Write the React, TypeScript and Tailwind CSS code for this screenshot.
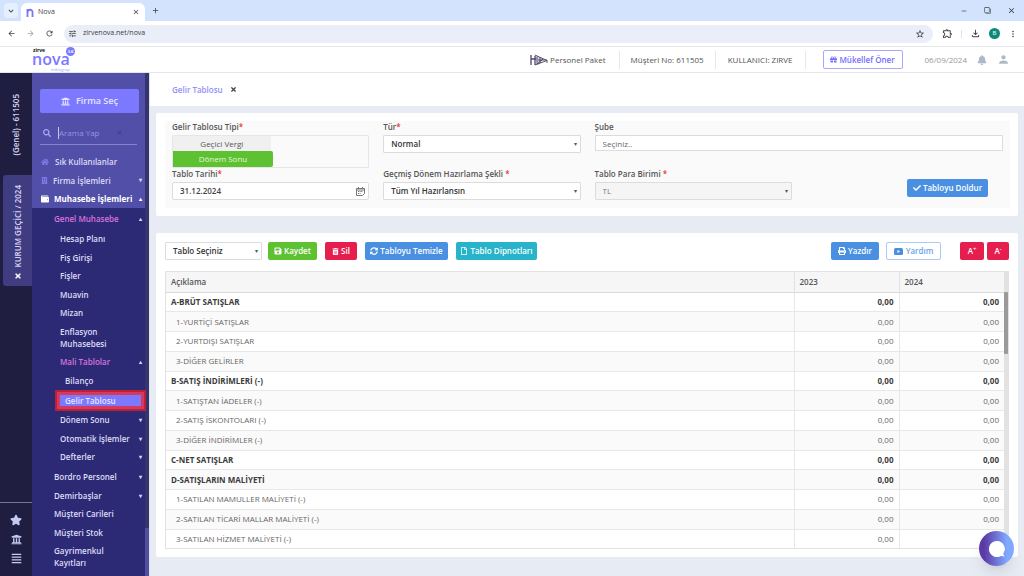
import type { ReactNode } from 'react';
import {
  FaAlignJustify,
  FaBell,
  FaBuilding,
  FaCheck,
  FaGift,
  FaHome,
  FaPrint,
  FaRegFile,
  FaSave,
  FaSearch,
  FaStar,
  FaSyncAlt,
  FaTimes,
  FaTrashAlt,
  FaUniversity,
  FaWallet,
} from 'react-icons/fa';
import {
  MdArrowBack,
  MdArrowForward,
  MdClose,
  MdFilterNone,
  MdKeyboardArrowDown,
  MdMoreVert,
  MdOutlineExtension,
  MdOutlineFileDownload,
  MdPerson,
  MdRefresh,
  MdRemove,
  MdAdd,
  MdStarBorder,
  MdTune,
} from 'react-icons/md';

type MenuEntry = { label: string; arrow?: string };

const generalItems = ['Hesap Planı', 'Fiş Girişi', 'Fişler', 'Muavin', 'Mizan', 'Enflasyon Muhasebesi'];

const periodItems: MenuEntry[] = [
  { label: 'Dönem Sonu', arrow: '▾' },
  { label: 'Otomatik İşlemler', arrow: '▾' },
  { label: 'Defterler', arrow: '▾' },
];

const otherItems: MenuEntry[] = [
  { label: 'Bordro Personel', arrow: '▾' },
  { label: 'Demirbaşlar', arrow: '▾' },
  { label: 'Müşteri Carileri' },
  { label: 'Müşteri Stok' },
  { label: 'Gayrimenkul Kayıtları' },
];

const rows = [
  { name: 'A-BRÜT SATIŞLAR', total: true },
  { name: '1-YURTİÇİ SATIŞLAR' },
  { name: '2-YURTDIŞI SATIŞLAR' },
  { name: '3-DİĞER GELİRLER' },
  { name: 'B-SATIŞ İNDİRİMLERİ (-)', total: true },
  { name: '1-SATIŞTAN İADELER (-)' },
  { name: '2-SATIŞ İSKONTOLARI (-)' },
  { name: '3-DİĞER İNDİRİMLER (-)' },
  { name: 'C-NET SATIŞLAR', total: true },
  { name: 'D-SATIŞLARIN MALİYETİ', total: true },
  { name: '1-SATILAN MAMULLER MALİYETİ (-)' },
  { name: '2-SATILAN TİCARİ MALLAR MALİYETİ (-)' },
  { name: '3-SATILAN HİZMET MALİYETİ (-)' },
];

function BrowserBar() {
  return (
    <div className="shrink-0 text-[#3c4043]">
      <div className="flex h-[21px] items-end bg-[#d3e3fd]">
        <button aria-label="Sekme ara" className="mb-[3px] ml-1 flex h-[15px] w-[14px] items-center justify-center rounded-[4px] bg-[#e6effd]">
          <MdKeyboardArrowDown size={10} />
        </button>
        <div className="ml-[3px] flex h-[18px] w-[124px] items-center rounded-t-[6px] bg-white px-[5px]">
          <svg viewBox="0 0 8 10" className="h-[9px] w-2" fill="none" stroke="#7b74f5" strokeWidth="2">
            <path d="M1.2 10V1M1.2 4.5C1.8 1.2 6.8 1 6.8 4.6V10" />
          </svg>
          <span className="ml-[4px] flex-1 text-[7px]">Nova</span>
          <button aria-label="Sekmeyi kapat">
            <MdClose size={8} />
          </button>
        </div>
        <button aria-label="Yeni sekme" className="mb-[6px] ml-[6px]">
          <MdAdd size={9} />
        </button>
        <div className="mb-[6px] ml-auto flex items-center gap-4 pr-2">
          <MdRemove size={8} />
          <MdFilterNone size={7} className="-scale-x-100" />
          <MdClose size={9} />
        </div>
      </div>
      <div className="flex h-[25px] items-center bg-white pr-[6px]">
        <div className="flex w-16 items-center gap-[10px] pl-[7px]">
          <MdArrowBack size={9} />
          <MdArrowForward size={9} className="text-[#a0a3a7]" />
          <MdRefresh size={9} />
        </div>
        <div className="flex h-[18px] flex-1 items-center rounded-full bg-[#e9eef8] pr-2 pl-1">
          <MdTune size={9} />
          <input
            aria-label="Adres"
            defaultValue="zirvenova.net/nova"
            className="ml-[6px] min-w-0 flex-1 bg-transparent text-[7px] outline-none"
          />
          <MdStarBorder size={10} />
        </div>
        <div className="ml-[9px] flex items-center">
          <MdOutlineExtension size={11} />
          <span className="mx-2 h-2 w-px bg-[#d3e3fd]" />
          <MdOutlineFileDownload size={11} />
          <span className="mx-2 flex h-[11px] w-[11px] items-center justify-center rounded-full bg-[#0b8a7a] text-[6px] text-white">B</span>
          <MdMoreVert size={10} />
        </div>
      </div>
    </div>
  );
}

function Logo() {
  return (
    <svg viewBox="0 0 46 26" className="ml-[31px] h-[26px] w-[46px]" aria-label="zirve nova">
      <text x="2" y="5" fontSize="5" fontWeight="700" fill="#111">zirve</text>
      <text x="1" y="18" fontSize="16" fontWeight="600" fill="#7b78ff">nova</text>
      <circle cx="39.5" cy="4.5" r="4.5" fill="#7b78ff" />
      <text x="36.7" y="6" fontSize="4" fontWeight="700" fill="#fff">3.0</text>
      <text x="20" y="24" fontSize="4" fill="#9d9bff" fontStyle="italic">mikrogrup</text>
    </svg>
  );
}

function Header() {
  return (
    <header className="flex h-[27px] shrink-0 items-center border-y border-[#e4e6ea] bg-white text-[8px] text-[#555]">
      <Logo />
      <div className="ml-auto flex items-center">
        <svg viewBox="0 0 18 14" className="h-[14px] w-[18px]" fill="none">
          <path d="M4 1.5 14 6 8 12.5Z" fill="#d8cff0" />
          <path d="M1 2v10M1 6h5M5 3v9" stroke="#51456e" strokeWidth="1.3" />
          <path d="M5 2l12 5.500L5 12M7 4v7l6-5M10 4v6M8 7h9v3" stroke="#4b4659" strokeWidth="0.9" />
        </svg>
        <span className="ml-[2px]">Personel Paket</span>
        <span className="ml-[13px] border-l border-[#e8e8ea] px-[11px] leading-[18px]">Müşteri No: 611505</span>
        <span className="border-x border-[#e8e8ea] px-3 leading-[18px]">KULLANICI: ZIRVE</span>
        <button className="ml-[17px] flex h-[19px] w-[80px] items-center justify-center gap-[2px] rounded-[2px] border border-[#a9a6ff] font-semibold text-[#736fff]">
          <FaGift size={7} />
          Mükellef Öner
        </button>
        <span className="ml-[22px] text-[#999]">06/09/2024</span>
        <button aria-label="Bildirimler" className="ml-[10px] text-[#aeb9c8]">
          <FaBell size={10} />
        </button>
        <button aria-label="Profil" className="mr-[14px] ml-[10px] text-[#aeb9c8]">
          <MdPerson size={13} />
        </button>
      </div>
    </header>
  );
}

function Rail() {
  return (
    <div className="flex w-8 shrink-0 flex-col items-center bg-[#201e40] text-[8px] font-semibold text-[#d6d5f0]">
      <div className="flex h-[102px] items-center pt-[2px]">
        <span className="rotate-180 [writing-mode:vertical-rl]">(Genel) - 611505</span>
      </div>
      <div className="flex h-[111px] w-[29px] flex-col items-center justify-center gap-1 self-end rounded-l-[3px] bg-[#3f3c82] pt-1">
        <span className="rotate-180 [writing-mode:vertical-rl]">KURUM GEÇİCİ / 2024</span>
        <button aria-label="Kapat" className="text-white">
          <FaTimes size={8} />
        </button>
      </div>
      <div className="mt-auto flex w-full flex-col items-center gap-2 border-t border-[#77758f] pt-[11px] pb-3 text-[#c3cbf3]">
        <button aria-label="Favoriler"><FaStar size={12} /></button>
        <button aria-label="Kurumlar"><FaUniversity size={11} /></button>
        <button aria-label="Menü"><FaAlignJustify size={11} /></button>
      </div>
    </div>
  );
}

function MenuLink({ label, arrow, className = '' }: MenuEntry & { className?: string }) {
  return (
    <a href="#" className={`flex items-center justify-between py-[3px] pr-[3px] leading-3 ${className}`}>
      <span className={arrow ? '' : 'max-w-[64px]'}>{label}</span>
      {arrow && <span className="text-[6px] text-[#d9d8f5]">{arrow}</span>}
    </a>
  );
}

function Sidebar() {
  return (
    <nav className="flex w-[117px] shrink-0 bg-[#514fa8] text-[8px] font-semibold text-[#dddcf5]">
      <div className="flex min-w-0 flex-1 flex-col">
        <button className="mr-[6px] ml-2 mt-4 flex h-6 items-center justify-center gap-[6px] rounded-[2px] bg-[#7d79ff] text-[9px] text-[#e6e5ff]">
          <FaUniversity size={9} />
          Firma Seç
        </button>
        <label className="mx-2 mt-2 mb-[7px] flex h-6 items-center border-b border-[#8683cf] pl-[3px] text-[#aaa7f5]">
          <FaSearch size={8} />
          <input
            type="text"
            aria-label="Arama"
            placeholder="Arama Yap"
            className="ml-[7px] w-[58px] border-l border-[#c6c5ee] bg-transparent font-normal outline-none placeholder:text-[#9794e0]"
          />
          <MdClose size={7} className="text-[#3c3a6d]" />
        </label>
        <a href="#" className="flex h-[19px] items-center gap-[6px] pl-[9px]">
          <FaHome size={8} className="text-[#7d79e8]" />
          Sık Kullanılanlar
        </a>
        <a href="#" className="flex h-[19px] items-center gap-[5px] pr-[3px] pl-[9px]">
          <FaBuilding size={7} className="text-[#7d79e8]" />
          <span className="flex-1">Firma İşlemleri</span>
          <span className="text-[6px]">▾</span>
        </a>
        <a href="#" className="flex h-[18px] items-center gap-[5px] pr-[3px] pl-[9px] font-bold text-white">
          <FaWallet size={8} />
          <span className="flex-1 whitespace-nowrap">Muhasebe İşlemleri</span>
          <span className="text-[6px]">▴</span>
        </a>
        <div className="flex-1 bg-[#2d2a75] pt-[2px]">
          <MenuLink label="Genel Muhasebe" arrow="▴" className="mb-[2px] pl-[22px] text-[#d873dd]" />
          <div>
            {generalItems.map((label) => (
              <MenuLink key={label} label={label} className="pl-[28px] even:mt-px" />
            ))}
          </div>
          <MenuLink label="Mali Tablolar" arrow="▴" className="pl-[28px] text-[#d873dd]" />
          <MenuLink label="Bilanço" className="mt-px pl-[33px]" />
          <a
            href="#"
            className="relative z-10 -mr-px ml-[23px] block border-2 border-[#bb2036] bg-[#d53a5e] p-[3px] text-[#e6e5ff]">
            <span className="block bg-[#7d79ff] pl-[5px] leading-[11px]">Gelir Tablosu</span>
          </a>
          <div>
            {periodItems.map((item) => (
              <MenuLink key={item.label} {...item} className="pl-[28px] even:mt-px" />
            ))}
          </div>
          <div className="mt-[2px]">
            {otherItems.map((item) => (
              <MenuLink key={item.label} {...item} className="pl-[22px] even:mt-px" />
            ))}
          </div>
        </div>
      </div>
      <div className="flex w-1 flex-col justify-end bg-[#37336e]">
        <div className="h-12 bg-[#514e9f]" />
      </div>
    </nav>
  );
}

function Field({ id, label, required, children }: { id: string; label: string; required?: boolean; children: ReactNode }) {
  return (
    <div className="px-[7px]">
      <label htmlFor={id} className="mb-[2px] block text-[8px] leading-3 font-semibold text-[#555]">
        {label}
        {required && <span className="text-[#f03030]">*</span>}
      </label>
      {children}
    </div>
  );
}

function Select({ id, value, className = '', label }: { id: string; value: string; className?: string; label?: string }) {
  return (
    <div className={`relative h-[18px] ${className}`}>
      <select
        id={id}
        aria-label={label}
        disabled={id === 'currency'}
        className="block h-full w-full appearance-none rounded-[1px] border border-[#dcdcdc] bg-white pl-[7px] text-[8px] font-semibold text-[#333] disabled:bg-[#f5f5f5] disabled:font-normal disabled:text-[#777] disabled:opacity-100">
        <option>{value}</option>
      </select>
      <span className="pointer-events-none absolute inset-y-0 right-1 flex items-center text-[6px] text-[#555]">▾</span>
    </div>
  );
}

function ActionButton({ icon, children, className }: { icon?: ReactNode; children: ReactNode; className: string }) {
  return (
    <button className={`flex h-[18px] items-center justify-center gap-[2px] rounded-[2px] text-[8px] font-semibold whitespace-nowrap ${className}`}>
      {icon}
      {children}
    </button>
  );
}

function FilterCard() {
  return (
    <section className="rounded-[2px] bg-white p-2 pl-[9px]">
      <form className="grid grid-cols-[1fr_1fr_2fr] bg-[#fafafa] pb-2">
        <Field id="annual" label="Gelir Tablosu Tipi" required>
          <div className="flex h-[33px] flex-col rounded-[1px] border border-[#e6e6e6] text-[8px]">
            <button type="button" className="h-[15px] w-1/2 bg-[#f0f0f0] text-[#555]">Geçici Vergi</button>
            <button type="button" id="annual" className="h-4 w-[100px] rounded-r-[2px] bg-[#5dc131] text-[#e4f7dc]">Dönem Sonu</button>
          </div>
        </Field>
        <Field id="kind" label="Tür" required>
          <Select id="kind" value="Normal" />
        </Field>
        <Field id="branch" label="Şube">
          <input id="branch" type="text" placeholder="Seçiniz.." className="block h-4 w-full border border-[#dcdcdc] bg-white px-[7px] text-[8px] placeholder:text-[#666]" />
        </Field>
        <Field id="date" label="Tablo Tarihi" required>
          <div className="flex h-[18px] items-center rounded-[2px] border border-[#dcdcdc] bg-white pr-[3px] pl-[7px]">
            <input id="date" type="text" defaultValue="31.12.2024" className="min-w-0 flex-1 text-[8px] font-semibold text-[#444] outline-none" />
            <svg viewBox="0 0 9 9" className="h-[9px] w-[9px]" fill="none" stroke="#777">
              <path d="M.5 1.500h8v5l-2 2h-6zM.5 3h8M2.500 0v2M6.500 0v2" />
              <path d="M2 4.500h5M2 6.500h3" strokeDasharray="1 .6" />
            </svg>
          </div>
        </Field>
        <Field id="previous" label="Geçmiş Dönem Hazırlama Şekli " required>
          <Select id="previous" value="Tüm Yıl Hazırlansın" />
        </Field>
        <div className="flex justify-between">
          <div className="w-1/2">
            <Field id="currency" label="Tablo Para Birimi " required>
              <Select id="currency" value="TL" />
            </Field>
          </div>
          <ActionButton icon={<FaCheck size={8} />} className="mt-[11px] mr-[22px] w-[81px] bg-[#4a90e2] text-white">
            Tabloyu Doldur
          </ActionButton>
        </div>
      </form>
    </section>
  );
}

function Toolbar() {
  return (
    <div className="flex items-center">
      <Select id="table" label="Tablo Seçiniz" value="Tablo Seçiniz" className="w-[97px]" />
      <ActionButton icon={<FaSave size={8} />} className="ml-[6px] w-[49px] bg-[#5dc131] text-white">Kaydet</ActionButton>
      <ActionButton icon={<FaTrashAlt size={7} />} className="ml-2 w-8 bg-[#e61e4d] text-white">Sil</ActionButton>
      <ActionButton icon={<FaSyncAlt size={8} />} className="ml-2 w-[83px] bg-[#4a90e2] text-white">Tabloyu Temizle</ActionButton>
      <ActionButton icon={<FaRegFile size={8} />} className="ml-2 w-[81px] bg-[#27b3c9] text-white">Tablo Dipnotları</ActionButton>
      <ActionButton icon={<FaPrint size={8} />} className="ml-auto w-12 bg-[#4a90e2] text-white">Yazdır</ActionButton>
      <ActionButton
        icon={
          <svg viewBox="0 0 9 7" className="mr-px h-[7px] w-[9px]">
            <rect width="9" height="7" rx="1.5" fill="#4a90e2" />
            <path d="M3.500 2v3l2.500-1.500z" fill="#fff" />
          </svg>
        }
        className="ml-[7px] w-[55px] border border-[#a9cbf3] bg-white text-[#6aa3e6]">
        Yardım
      </ActionButton>
      <ActionButton className="ml-[19px] w-6 bg-[#e61e4d] text-white">
        <span>A<sup className="text-[6px]">+</sup></span>
      </ActionButton>
      <ActionButton className="ml-[3px] w-[22px] bg-[#e61e4d] text-white">
        <span>A<sup className="text-[6px]">-</sup></span>
      </ActionButton>
    </div>
  );
}

function IncomeTable() {
  return (
    <div className="mt-[11px] flex border border-[#e2e2e2]">
      <table className="h-[276px] flex-1 table-fixed border-collapse text-[8px] leading-3 text-[#666]">
        <thead>
          <tr className="h-5 border-b border-[#dadada] bg-[#f6f6f6] text-left text-[#555]">
            <th className="px-[5px] font-semibold">Açıklama</th>
            <th className="w-[105px] border-l border-[#e2e2e2] px-[5px] font-semibold">2023</th>
            <th className="w-[105px] border-l border-[#e2e2e2] px-[5px] font-semibold">2024</th>
          </tr>
        </thead>
        <tbody>
          {rows.map((row) => (
            <tr
              key={row.name}
              className={`border-b border-[#e8e8e8] last:border-b-0 odd:bg-white even:bg-[#fafafa] ${row.total ? 'font-bold text-[#3c3c3c]' : ''}`}>
              <td className={row.total ? 'pl-[5px]' : 'pl-[10px]'}>{row.name}</td>
              <td className="border-l border-[#e8e8e8] pr-[5px] text-right">0,00</td>
              <td className="border-l border-[#e8e8e8] pr-[5px] text-right">0,00</td>
            </tr>
          ))}
        </tbody>
      </table>
      <div className="w-1 bg-[#e2e2e2] pt-5">
        <div className="h-[62px] rounded-[1px] bg-[#9a9a9a]" />
      </div>
    </div>
  );
}

export default function App() {
  return (
    <div className="flex min-h-screen flex-col bg-[#e7ebf3] font-['Open_Sans','Noto_Sans',sans-serif]">
      <BrowserBar />
      <Header />
      <div className="flex flex-1">
        <Rail />
        <Sidebar />
        <main className="min-w-0 flex-1 border-l border-[#dfe2ea]">
          <div className="flex h-[33px] items-center gap-[7px] bg-white pl-[22px] text-[8px] font-semibold">
            <a href="#" className="text-[#9390f8]">Gelir Tablosu</a>
            <button aria-label="Sekmeyi kapat" className="text-[#444]">
              <FaTimes size={7} />
            </button>
          </div>
          <div className="flex flex-col gap-[17px] pt-[7px] pr-[6px] pl-[6px]">
            <FilterCard />
            <section className="rounded-[2px] bg-white px-[9px] pt-[9px] pb-2">
              <Toolbar />
              <IncomeTable />
            </section>
          </div>
        </main>
      </div>
      <button
        aria-label="Sohbet"
        className="fixed right-[10px] bottom-[10px] z-20 flex h-[35px] w-[35px] items-center justify-center rounded-full bg-linear-to-r from-[#5b3aa5] from-15% to-[#7fa8ff] to-80% shadow-lg">
        <svg viewBox="0 0 16 16" className="h-4 w-4" fill="#fff">
          <path d="M8 0a8 8 0 1 0 4 14.900L15.500 15.500 14.200 12.800A8 8 0 0 0 8 0Z" />
        </svg>
      </button>
    </div>
  );
}
